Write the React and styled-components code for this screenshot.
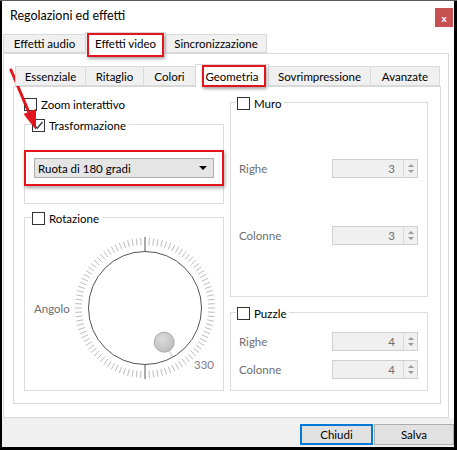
import React from "react";
import styled, { createGlobalStyle } from "styled-components";

const GlobalStyle = createGlobalStyle`
  html, body { margin: 0; padding: 0; background: #000; }
  body {
    font-family: Lato, "Noto Sans", "Liberation Sans", sans-serif;
    font-size: 11.5px;
    color: #000;
  }
  * { box-sizing: border-box; }
`;

const Screen = styled.div`
  position: relative;
  width: 457px;
  height: 450px;
  background: #000;
  border-top: 1px solid #5a5a5a;
  padding: 0 3px 3px 2px;
`;

const Window = styled.div`
  height: 100%;
  display: flex;
  flex-direction: column;
  background: #fff;
`;

const TitleBar = styled.div`
  height: 30px;
  display: flex;
  align-items: flex-start;
  justify-content: space-between;
  padding: 7px 1px 0 8px;
`;

const Title = styled.span`
  font-size: 12.5px;
  line-height: 16px;
`;

const CloseButton = styled.div`
  width: 18px;
  height: 19px;
  background: #c75050;
  color: #fff;
  font-size: 10px;
  font-weight: bold;
  display: flex;
  align-items: center;
  justify-content: center;
`;

const TabBar = styled.div`
  display: flex;
  align-items: flex-end;
  height: ${p => p.height}px;
  padding-left: ${p => p.indent}px;
  position: relative;
  z-index: 1;
`;

const Tab = styled.div`
  position: relative;
  width: ${p => p.w}px;
  height: ${p => (p.active ? p.h + 3 : p.h)}px;
  margin-right: -1px;
  margin-bottom: ${p => (p.active ? -1 : 0)}px;
  border: 1px solid #d9d9d9;
  border-bottom: ${p => (p.active ? "none" : "1px solid #d9d9d9")};
  background: ${p => (p.active ? "#fff" : "#f0f0f0")};
  display: flex;
  align-items: center;
  justify-content: center;
  white-space: nowrap;
  z-index: ${p => (p.active ? 2 : 0)};
`;

const Highlight = styled.span`
  position: absolute;
  top: ${p => p.t}px;
  left: ${p => p.l}px;
  right: ${p => p.r}px;
  bottom: ${p => p.b}px;
  border: 2px solid #e3141b;
  box-shadow: 1px 2px 3px rgba(0, 0, 0, 0.35);
  pointer-events: none;
`;

const OuterPane = styled.div`
  flex: 1;
  margin: 0 5px 0 1px;
  border: 1px solid #d9d9d9;
  padding: 9px 7px 13px 9px;
  display: flex;
  flex-direction: column;
`;

const InnerPane = styled.div`
  flex: 1;
  border: 1px solid #d9d9d9;
  padding: 0 11px 12px 10px;
  display: grid;
  grid-template-columns: 200px 198px;
  column-gap: 6px;
`;

const Column = styled.div`
  display: flex;
  flex-direction: column;
  padding-top: ${p => p.top}px;
`;

const CheckRow = styled.label`
  display: flex;
  align-items: center;
  gap: 4px;
  height: 16px;
  white-space: nowrap;
`;

const Box = styled.span`
  width: 13px;
  height: 13px;
  border: 1px solid #333;
  background: #fff;
  display: inline-flex;
  align-items: center;
  justify-content: center;
  flex: none;
`;

const Group = styled.fieldset`
  margin: ${p => p.gap || 0}px 0 0 0;
  padding: 0 ${p => p.pr || 0}px 0 ${p => p.pl || 0}px;
  border: 1px solid #dcdcdc;
  min-width: 0;
  display: flex;
  flex-direction: column;
  flex: ${p => (p.grow ? 1 : "none")};
`;

const Legend = styled.legend`
  margin-left: ${p => p.offset}px;
  padding: 0 3px 0 1px;
  height: 14px;
`;

const ComboFrame = styled.div`
  margin: 19px -1px 17px;
  border: 2px solid #e3141b;
  box-shadow: 1px 2px 4px rgba(0, 0, 0, 0.35);
  padding: 6px 8px;
`;

const Combo = styled.div`
  height: 20px;
  border: 1px solid #adadad;
  background: #e5e5e5;
  display: flex;
  align-items: center;
  justify-content: space-between;
  padding: 0 6px 0 3px;
`;

const Caret = styled.span`
  width: 0;
  height: 0;
  border-left: 4px solid transparent;
  border-right: 4px solid transparent;
  border-top: 4px solid #000;
`;

const FieldRow = styled.div`
  display: flex;
  align-items: center;
  justify-content: space-between;
  margin-top: ${p => p.top}px;
`;

const Dim = styled.span`
  color: #6d6d6d;
`;

const Spin = styled.div`
  width: 86px;
  height: 19px;
  border: 1px solid #cfcfcf;
  background: #f0f0f0;
  display: flex;
  align-items: center;
  justify-content: flex-end;
  color: #6d6d6d;
`;

const SpinValue = styled.span`
  padding-right: 8px;
`;

const SpinButtons = styled.div`
  width: 14px;
  height: 100%;
  border-left: 1px solid #dadada;
  display: flex;
  flex-direction: column;
  align-items: center;
  justify-content: center;
  gap: 3px;
`;

const Tri = styled.span`
  width: 0;
  height: 0;
  border-left: 3px solid transparent;
  border-right: 3px solid transparent;
  ${p => (p.up ? "border-bottom: 3px solid #9a9a9a;" : "border-top: 3px solid #9a9a9a;")}
`;

const DialRow = styled.div`
  display: flex;
  align-items: center;
  margin: 8px 0 6px;
`;

const DialLabel = styled(Dim)`
  width: 35px;
`;

const Footer = styled.div`
  height: 29px;
  background: #f0f0f0;
  display: flex;
  justify-content: flex-end;
  align-items: flex-start;
  padding-top: 6px;
  gap: 1px;
`;

const Button = styled.div`
  width: ${p => p.w}px;
  height: 21px;
  border: ${p => (p.focused ? "2px solid #0078d7" : "1px solid #adadad")};
  background: #e1e1e1;
  display: flex;
  align-items: center;
  justify-content: center;
`;

const ArrowLayer = styled.svg`
  position: absolute;
  left: 0;
  top: 0;
  pointer-events: none;
`;

const Check = ({ checked }) => (
  <Box>
    {checked && (
      <svg width="11" height="11" viewBox="0 0 11 11">
        <path d="M1.5 5.5 L4.2 8.2 L9.5 2" fill="none" stroke="#333" strokeWidth="1.3" />
      </svg>
    )}
  </Box>
);

const SpinBox = ({ value }) => (
  <Spin>
    <SpinValue>{value}</SpinValue>
    <SpinButtons>
      <Tri up />
      <Tri />
    </SpinButtons>
  </Spin>
);

const Dial = () => {
  const c = 76;
  const ticks = [];
  for (let i = 0; i < 100; i++) {
    const a = (i * 3.6 * Math.PI) / 180;
    const major = i === 0 || i === 50;
    const r1 = major ? 57 : 63;
    const r2 = major ? 71 : 70;
    ticks.push(
      <line
        key={i}
        x1={c + r1 * Math.sin(a)}
        y1={c - r1 * Math.cos(a)}
        x2={c + r2 * Math.sin(a)}
        y2={c - r2 * Math.cos(a)}
        stroke={major ? "#555" : "#bdbdbd"}
        strokeWidth="1"
      />
    );
  }
  return (
    <svg width="152" height="152" viewBox="0 0 152 152">
      <defs>
        <radialGradient id="knob" cx="40%" cy="35%" r="70%">
          <stop offset="0%" stopColor="#dcdcdc" />
          <stop offset="100%" stopColor="#bcbcbc" />
        </radialGradient>
      </defs>
      {ticks}
      <circle cx={c} cy={c} r="56.5" fill="#fff" stroke="#555" strokeWidth="1" />
      <line x1={c + 19.2 * 1.15} y1={c + 34.2 * 1.15} x2={c + 19.2 * 1.42} y2={c + 34.2 * 1.42} stroke="#e2e2e2" strokeWidth="2" />
      <circle cx={c + 19.2} cy={c + 34.2} r="10" fill="url(#knob)" stroke="#aaa" strokeWidth="1" />
      <text x="125" y="137" fontSize="11.5" fill="#7c7c8c" fontFamily="Lato, sans-serif">330</text>
    </svg>
  );
};

const outerTabs = [
  { label: "Effetti audio", w: 83 },
  { label: "Effetti video", w: 81, active: true },
  { label: "Sincronizzazione", w: 102 },
];

const innerTabs = [
  { label: "Essenziale", w: 71 },
  { label: "Ritaglio", w: 59 },
  { label: "Colori", w: 53 },
  { label: "Geometria", w: 74, active: true },
  { label: "Sovrimpressione", w: 103 },
  { label: "Avanzate", w: 70 },
];

export default function App() {
  return (
    <>
      <GlobalStyle />
      <Screen>
        <Window>
          <TitleBar>
            <Title>Regolazioni ed effetti</Title>
            <CloseButton>x</CloseButton>
          </TitleBar>

          <TabBar height={22} indent={1}>
            {outerTabs.map(t => (
              <Tab key={t.label} w={t.w} h={19} active={t.active}>
                {t.label}
                {t.active && <Highlight t={0} l={1} r={1} b={-3} />}
              </Tab>
            ))}
          </TabBar>

          <OuterPane>
            <TabBar height={23} indent={2}>
              {innerTabs.map(t => (
                <Tab key={t.label} w={t.w} h={20} active={t.active}>
                  {t.label}
                  {t.active && <Highlight t={0} l={6} r={2} b={0} />}
                </Tab>
              ))}
            </TabBar>

            <InnerPane>
              <Column top={9}>
                <CheckRow>
                  <Check />
                  Zoom interattivo
                </CheckRow>

                <Group gap={5}>
                  <Legend offset={6}>
                    <CheckRow>
                      <Check checked />
                      Trasformazione
                    </CheckRow>
                  </Legend>
                  <ComboFrame>
                    <Combo>
                      Ruota di 180 gradi
                      <Caret />
                    </Combo>
                  </ComboFrame>
                </Group>

                <Group gap={6} grow pl={9}>
                  <Legend offset={-3}>
                    <CheckRow>
                      <Check />
                      Rotazione
                    </CheckRow>
                  </Legend>
                  <DialRow>
                    <DialLabel>Angolo</DialLabel>
                    <Dial />
                  </DialRow>
                </Group>
              </Column>

              <Column top={8}>
                <Group grow pl={8} pr={9}>
                  <Legend offset={-3}>
                    <CheckRow>
                      <Check />
                      Muro
                    </CheckRow>
                  </Legend>
                  <FieldRow top={50}>
                    <Dim>Righe</Dim>
                    <SpinBox value="3" />
                  </FieldRow>
                  <FieldRow top={48}>
                    <Dim>Colonne</Dim>
                    <SpinBox value="3" />
                  </FieldRow>
                </Group>

                <Group gap={8} pl={8} pr={9}>
                  <Legend offset={-3}>
                    <CheckRow>
                      <Check />
                      Puzzle
                    </CheckRow>
                  </Legend>
                  <FieldRow top={13}>
                    <Dim>Righe</Dim>
                    <SpinBox value="4" />
                  </FieldRow>
                  <FieldRow top={9}>
                    <Dim>Colonne</Dim>
                    <SpinBox value="4" />
                  </FieldRow>
                  <FieldRow top={11} />
                </Group>
              </Column>
            </InnerPane>
          </OuterPane>

          <Footer>
            <Button w={73} focused>Chiudi</Button>
            <Button w={80}>Salva</Button>
          </Footer>
        </Window>

        <ArrowLayer width="457" height="450">
          <line x1="11" y1="69" x2="30" y2="114" stroke="#e3141b" strokeWidth="3" strokeLinecap="round" />
          <polygon points="36,129 23.5,113 36,108" fill="#e3141b" />
        </ArrowLayer>
      </Screen>
    </>
  );
}
